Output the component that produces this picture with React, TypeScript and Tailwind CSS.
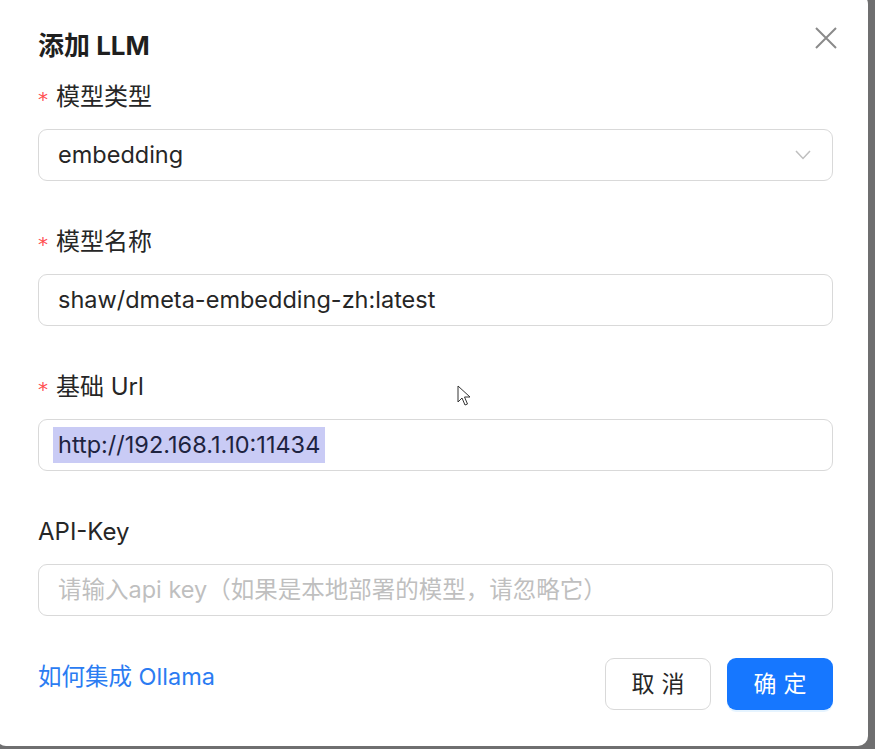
import React from "react";

const font = { fontFamily: '"Inter", "Noto Sans CJK SC", sans-serif' };

function Label({ text, required = true }: { text: string; required?: boolean }) {
  return (
    <div className="flex h-[32px] items-center text-[24px] text-[#262626]">
      {required && (
        <span className="mr-[8px] mt-[4px] text-[20px] leading-none text-[#ff4d4f]" style={{ fontFamily: '"DejaVu Sans", sans-serif' }}>
          *
        </span>
      )}
      <span>{text}</span>
    </div>
  );
}

export default function App() {
  return (
    <div className="h-[749px] w-[875px] overflow-hidden bg-[#6f6f70]" style={font}>
      <div className="relative ml-[-4px] mt-[-6px] h-[752px] w-[872px] rounded-[10px] bg-white pl-[42px] pr-[35px] pt-[35px]">
        <div className="flex h-[32px] items-center justify-between">
          <div className="text-[26px] font-bold text-[#1f1f1f]">添加 LLM</div>
          <button className="mr-[-5px] mt-[-14px] flex h-[24px] w-[24px] items-center justify-center">
            <svg width="22" height="22" viewBox="0 0 22 22" fill="none" stroke="#8a8a8a" strokeWidth="2">
              <path d="M1 1 L21 21 M21 1 L1 21" />
            </svg>
          </button>
        </div>

        <div className="mt-[20px]">
          <Label text="模型类型" />
          <div className="mt-[16px] flex h-[52px] items-center justify-between rounded-[9px] border border-[#d9d9d9] pl-[19px] pr-[21px] text-[23.5px] text-[#262626]">
            <span>embedding</span>
            <svg width="16" height="10" viewBox="0 0 16 10" fill="none" stroke="#bfbfbf" strokeWidth="1.5">
              <path d="M1 1 L8 8.5 L15 1" />
            </svg>
          </div>
        </div>

        <div className="mt-[45px]">
          <Label text="模型名称" />
          <div className="mt-[16px] flex h-[52px] items-center rounded-[9px] border border-[#d9d9d9] pl-[19px] text-[23.5px] text-[#262626]">
            shaw/dmeta-embedding-zh:latest
          </div>
        </div>

        <div className="mt-[45px]">
          <Label text="基础 Url" />
          <div className="mt-[16px] flex h-[52px] items-center rounded-[9px] border border-[#d9d9d9] pl-[14px] text-[23.5px] text-[#1e2340]">
            <span className="bg-[#c9cbf5] px-[5px]">http://192.168.1.10:11434</span>
          </div>
        </div>

        <div className="mt-[45px]">
          <Label text="API-Key" required={false} />
          <div className="mt-[16px] flex h-[52px] items-center rounded-[9px] border border-[#d9d9d9] pl-[19px] text-[23.5px] text-[#bfbfbf]">
            请输入api key（如果是本地部署的模型，请忽略它）
          </div>
        </div>

        <div className="mt-[42px] flex items-center justify-between">
          <a className="mb-[14px] text-[23.5px] text-[#2b7cf2]">如何集成 Ollama</a>
          <div className="flex gap-[16px]">
            <button className="h-[52px] w-[106px] rounded-[9px] border border-[#d9d9d9] bg-white text-[23px] tracking-[0.3em] text-[#262626]">
              <span className="ml-[0.3em]">取消</span>
            </button>
            <button className="h-[52px] w-[106px] rounded-[9px] bg-[#1677ff] text-[23px] tracking-[0.3em] text-white shadow-[0_2px_0_rgba(5,145,255,0.1)]">
              <span className="ml-[0.3em]">确定</span>
            </button>
          </div>
        </div>

        <svg className="absolute left-[461px] top-[391px]" width="14" height="22" viewBox="0 0 14 22">
          <path d="M1 1 L1 17 L5 13 L8 20 L10.5 19 L7.5 12 L13 12 Z" fill="white" stroke="#333" strokeWidth="1" strokeLinejoin="round" />
        </svg>
      </div>
    </div>
  );
}
